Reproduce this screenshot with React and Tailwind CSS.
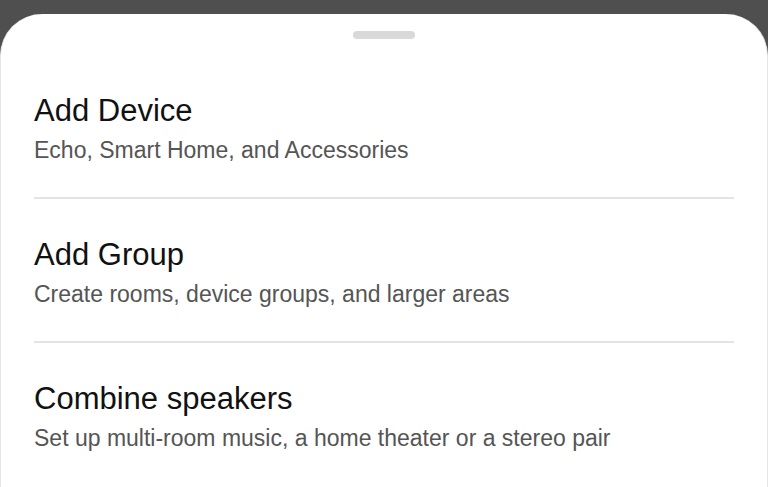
import React from 'react'

const items = [
  { title: 'Add Device', sub: 'Echo, Smart Home, and Accessories' },
  { title: 'Add Group', sub: 'Create rooms, device groups, and larger areas' },
  { title: 'Combine speakers', sub: 'Set up multi-room music, a home theater or a stereo pair' },
]

export default function App() {
  return (
    <div className="h-[487px] w-[768px] overflow-hidden bg-[#4f4f4f] pt-[14px] font-['Liberation_Sans',Arial,sans-serif]">
      <div className="h-[473px] rounded-t-[42px] border-x border-[#e6e6e6] bg-white px-[33px]">
        <div className="flex justify-center pt-[17px]">
          <div className="h-[8px] w-[62px] rounded-full bg-[#d9d9d9]" />
        </div>
        <div className="mt-[54px]">
          {items.map((it, i) => (
            <div key={it.title}>
              {i > 0 && <div className="h-[2px] bg-[#e3e3e3]" />}
              <div className={i === 0 ? 'pb-[34px]' : 'pt-[38px] pb-[34px]'}>
                <div className="text-[31px] leading-[36px] text-[#111]">{it.title}</div>
                <div className="mt-[8px] text-[23px] leading-[26px] text-[#555]">{it.sub}</div>
              </div>
            </div>
          ))}
        </div>
      </div>
    </div>
  )
}
